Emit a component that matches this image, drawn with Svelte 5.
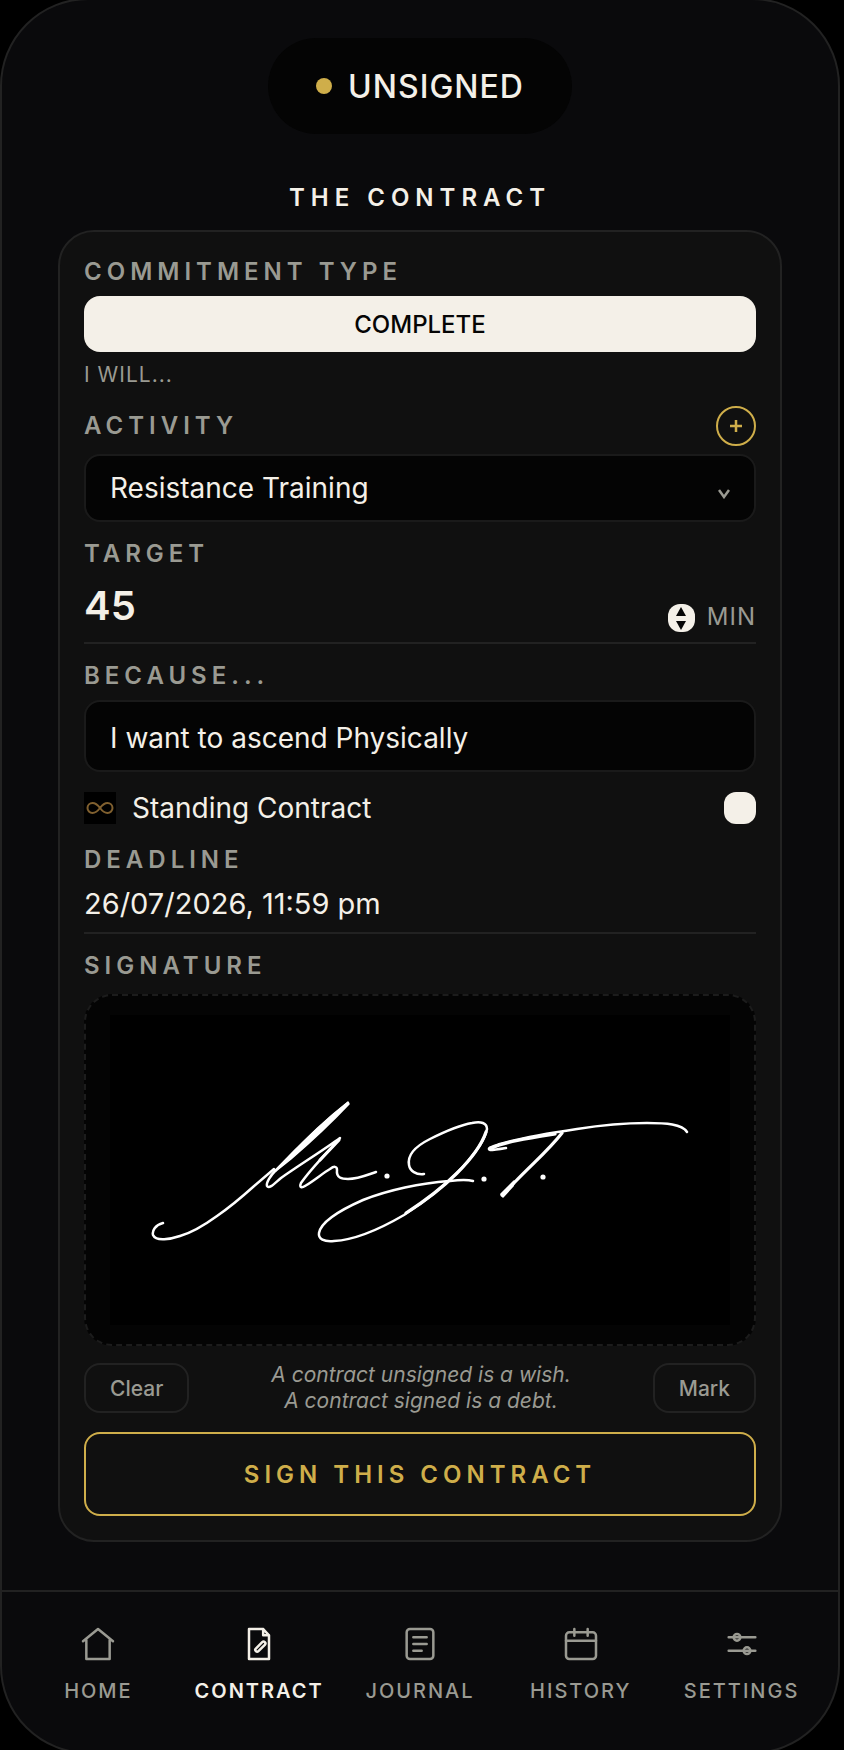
<script lang="ts">
  const commitmentTypes = ["COMPLETE"];
  const activities = ["Resistance Training"];

  const navItems = [
    { id: "home", label: "HOME" },
    { id: "contract", label: "CONTRACT" },
    { id: "journal", label: "JOURNAL" },
    { id: "history", label: "HISTORY" },
    { id: "settings", label: "SETTINGS" }
  ];

  let commitment = $state("COMPLETE");
  let activity = $state("Resistance Training");
  let target = $state(45);
  let because = $state("I want to ascend Physically");
  let standing = $state(false);
  let deadline = $state("26/07/2026, 11:59 pm");
  let marked = $state(true);
  let signed = $state(false);
  let currentPage = $state("contract");

  function step(amount: number) {
    target = Math.max(0, target + amount);
  }

  function clearSignature() {
    marked = false;
    signed = false;
  }
</script>

<div class="stage">
  <div class="phone">
    <main>
      <div class="status" role="status">
        <span class="status-dot" class:signed></span>
        {signed ? "SIGNED" : "UNSIGNED"}
      </div>

      <h1>THE CONTRACT</h1>

      <form class="card" onsubmit={(e) => e.preventDefault()}>
        <div class="field">
          <span class="label" id="commitment-label">COMMITMENT TYPE</span>
          <div class="segments" role="group" aria-labelledby="commitment-label">
            {#each commitmentTypes as type}
              <button type="button" class="segment" aria-pressed={commitment === type} onclick={() => (commitment = type)}>{type}</button>
            {/each}
          </div>
          <p class="hint">I WILL...</p>
        </div>

        <div class="field">
          <div class="label-row">
            <label class="label" for="activity">ACTIVITY</label>
            <button type="button" class="add" aria-label="Add activity">
              <svg viewBox="0 0 12 12" aria-hidden="true"><path d="M6 0v12M0 6h12" /></svg>
            </button>
          </div>
          <div class="select">
            <select id="activity" bind:value={activity}>
              {#each activities as name}
                <option>{name}</option>
              {/each}
            </select>
            <svg class="caret" viewBox="0 0 12 10" aria-hidden="true"><path d="M1 1l5 7 5-7" /></svg>
          </div>
        </div>

        <div class="field">
          <label class="label" for="target">TARGET</label>
          <div class="target">
            <input id="target" type="number" min="0" bind:value={target} />
            <div class="stepper">
              <button type="button" aria-label="Increase" onclick={() => step(1)}>
                <svg viewBox="0 0 10 9" aria-hidden="true"><path d="M5 0l5 9H0z" /></svg>
              </button>
              <button type="button" aria-label="Decrease" onclick={() => step(-1)}>
                <svg viewBox="0 0 10 9" aria-hidden="true"><path d="M5 9l5-9H0z" /></svg>
              </button>
            </div>
            <span class="unit">MIN</span>
          </div>
        </div>

        <div class="field">
          <label class="label" for="because">BECAUSE...</label>
          <input id="because" class="box" type="text" bind:value={because} />
        </div>

        <label class="standing">
          <svg class="infinity" viewBox="0 0 32 32" aria-hidden="true">
            <path d="M16 16c-3-4-5-5-7.500-5a5 5 0 0 0 0 10c2.500 0 4.500-1 7.500-5s5-5 7.500-5a5 5 0 0 1 0 10c-2.500 0-4.500-1-7.500-5z" />
          </svg>
          <span>Standing Contract</span>
          <input type="checkbox" bind:checked={standing} />
        </label>

        <div class="field">
          <label class="label" for="deadline">DEADLINE</label>
          <input id="deadline" class="deadline" type="text" bind:value={deadline} />
        </div>

        <div class="field signature">
          <span class="label">SIGNATURE</span>
          <div class="pad">
            <svg viewBox="0 0 620 310" role="img" aria-label="Signature">
              <rect width="620" height="310" fill="#000" />
              {#if marked}
                <g class="ink">
                  <path d="M53 208C45 210 42 216 43 220C46 227 61 224 70 221C84 217 96 209 107 201C120 192 133 181 143 172L164 154" />
                  <path d="M238 88C212 109 188 132 166 155C160 161 156 168 157 171C159 175 166 167 171 163C188 151 215 134 230 123C219 136 202 152 191 168C189 173 192 173 195 171C205 165 213 158 220 154C224 151 227 151 227 155C226 163 232 164 238 164C248 164 257 160 266 157" />
                  <path class="firm" d="M229 125L210 145" />
                  <path class="blot" d="M238 87C220 101 198 121 178 143L166 156L181 144C203 125 222 107 239 89z" />
                  <path d="M314 159C306 160 300 156 299 150C297 139 308 130 320 124C336 116 350 110 362 108C371 106 377 108 377 114C375 125 367 135 358 146C340 167 320 183 294 200C270 214 244 225 224 226C214 227 208 224 209 218C211 207 228 196 253 185C278 175 311 168 339 166C348 165 356 164 363 166" />
                  <path class="firm" d="M376 117C367 143 334 174 296 198" />
                  <path d="M396 133C390 134 384 135 380 135C376 133 384 131 390 129C414 122 440 118 467 114C492 110 516 108 537 108C556 108 572 109 577 117" />
                  <path class="firm" d="M382 133C394 127 420 123 445 119M452 118C438 136 422 149 404 168L392 180" />
                  <path class="blot" d="M404 166L391 179L393 182L403 171z" />
                </g>
                <circle cx="277" cy="161" r="2.600" />
                <circle cx="374" cy="164" r="2.600" />
                <circle cx="433" cy="162" r="2.600" />
              {/if}
            </svg>
          </div>
        </div>

        <div class="pad-actions">
          <button type="button" class="small" onclick={clearSignature}>Clear</button>
          <p>A contract unsigned is a wish.<br />A contract signed is a debt.</p>
          <button type="button" class="small" onclick={() => (marked = true)}>Mark</button>
        </div>

        <button type="submit" class="sign" onclick={() => (signed = marked)}>SIGN THIS CONTRACT</button>
      </form>
    </main>

    <nav aria-label="Main">
      {#each navItems as item}
        <a
          href="#{item.id}"
          class:active={currentPage === item.id}
          aria-current={currentPage === item.id ? "page" : undefined}
          onclick={() => (currentPage = item.id)}
        >
          <svg viewBox="0 0 24 24" aria-hidden="true">
            {#if item.id === "home"}
              <path d="M3 10.300L12 3l9 7.300M5 9.500V21h14V9.500" />
            {:else if item.id === "contract"}
              <path d="M6 3h8.500L18 6.800V21H6zM14.500 3v3.800H18" />
              <rect x="9" y="12.500" width="7.600" height="2.200" rx="1.100" transform="rotate(-45 12.800 13.600)" />
            {:else if item.id === "journal"}
              <rect x="4" y="3" width="16" height="18" rx="2" />
              <path d="M8 8h8M8 12h8M8 16h5" />
            {:else if item.id === "history"}
              <rect x="3" y="5" width="18" height="16" rx="2" />
              <path d="M3 10h18M8 3v4M16 3v4" />
            {:else}
              <path d="M4 8h16M4 16h16" />
              <circle cx="9" cy="8" r="2" />
              <circle cx="15" cy="16" r="2" />
            {/if}
          </svg>
          <span>{item.label}</span>
        </a>
      {/each}
    </nav>
  </div>
</div>

<style>
  :global(body) {
    background: #000;
  }

  .stage {
    --cream: #f4f0e8;
    --grey: #9a9a92;
    --gold: #cfae4a;
    --line: #222;

    display: flex;
    flex-direction: column;
    box-sizing: border-box;
    min-height: 100vh;
    padding-right: 4px;
    overflow: hidden;
    background: #000;
    color: var(--cream);
    font-family: Inter, "Liberation Sans", sans-serif;
  }

  .stage :global(*) {
    box-sizing: border-box;
  }

  .phone {
    display: flex;
    flex: 1;
    flex-direction: column;
    margin: -2px 0 -4px;
    border: 2px solid var(--line);
    border-radius: 88px;
    background: #0a0a0c;
    overflow: hidden;
  }

  main {
    display: flex;
    flex: 1;
    flex-direction: column;
    align-items: center;
    padding: 38px 56px 48px;
  }

  button,
  input,
  select {
    margin: 0;
    padding: 0;
    border: 0;
    background: none;
    color: inherit;
    font: inherit;
  }

  input,
  select {
    min-width: 0;
    outline: none;
  }

  button {
    cursor: pointer;
  }

  p {
    margin: 0;
  }

  svg {
    display: block;
  }

  .status {
    display: flex;
    align-items: center;
    gap: 16px;
    height: 96px;
    padding: 0 48px;
    border-radius: 48px;
    background: #040404;
    font-size: 32px;
    font-weight: 500;
    letter-spacing: 1px;
  }

  .status-dot {
    width: 16px;
    height: 16px;
    border-radius: 50%;
    background: var(--gold);
  }

  .status-dot.signed {
    background: var(--cream);
  }

  h1 {
    margin: 48px 0 16px;
    font-size: 24px;
    font-weight: 600;
    line-height: 32px;
    letter-spacing: 6px;
  }

  .card {
    display: flex;
    flex-direction: column;
    gap: 16px;
    width: 100%;
    padding: 24px;
    border: 2px solid var(--line);
    border-radius: 36px;
    background: #101010;
  }

  .field {
    display: flex;
    flex-direction: column;
    gap: 8px;
  }

  .label {
    color: var(--grey);
    font-size: 24px;
    font-weight: 600;
    line-height: 32px;
    letter-spacing: 5px;
  }

  .label-row {
    display: flex;
    align-items: center;
    justify-content: space-between;
  }

  .segments {
    display: flex;
    border-radius: 16px;
    overflow: hidden;
  }

  .segment {
    flex: 1;
    height: 56px;
    font-size: 24px;
    font-weight: 500;
  }

  .segment[aria-pressed="true"] {
    background: var(--cream);
    color: #050505;
  }

  .hint {
    color: var(--grey);
    font-size: 21px;
    line-height: 30px;
    letter-spacing: 1px;
  }

  .add {
    display: grid;
    place-items: center;
    width: 40px;
    height: 40px;
    border: 2px solid var(--gold);
    border-radius: 50%;
  }

  .add svg {
    width: 12px;
    stroke: var(--gold);
    stroke-width: 2.5;
  }

  .select {
    display: grid;
    align-items: center;
  }

  .select > * {
    grid-area: 1 / 1;
  }

  .select select,
  .box {
    width: 100%;
    height: 68px;
    padding: 0 24px;
    border: 2px solid #1a1a1a;
    border-radius: 16px;
    background: #040404;
    font-size: 28px;
    appearance: none;
  }

  .box {
    height: 72px;
    padding-top: 4px;
  }

  .caret {
    width: 12px;
    margin: 12px 26px 0 0;
    justify-self: end;
    fill: none;
    stroke: var(--grey);
    stroke-width: 2.5;
    pointer-events: none;
  }

  .target {
    display: flex;
    align-items: flex-end;
    gap: 12px;
    padding-bottom: 10px;
    border-bottom: 2px solid var(--line);
  }

  .target input {
    flex: 1;
    height: 54px;
    font-size: 40px;
    font-weight: 600;
    appearance: textfield;
  }

  .target input::-webkit-inner-spin-button {
    display: none;
  }

  .stepper {
    display: flex;
    flex-direction: column;
    width: 27px;
    height: 28px;
    border-radius: 12px;
    background: var(--cream);
    overflow: hidden;
  }

  .stepper button {
    display: grid;
    flex: 1;
    place-items: center;
  }

  .stepper svg {
    width: 10px;
    fill: #050505;
  }

  .unit {
    color: var(--grey);
    font-size: 24px;
    line-height: 30px;
    letter-spacing: 1px;
  }

  .standing {
    display: flex;
    align-items: center;
    gap: 16px;
    height: 40px;
    font-size: 28px;
  }

  .standing span {
    flex: 1;
  }

  .infinity {
    width: 32px;
    background: #000;
    fill: none;
    stroke: #80602f;
    stroke-width: 2;
  }

  .standing input {
    width: 32px;
    height: 32px;
    border-radius: 12px;
    background: var(--cream);
    appearance: none;
  }

  .standing input:checked {
    background: var(--gold);
  }

  .deadline {
    height: 50px;
    padding-bottom: 10px;
    border-bottom: 2px solid var(--line);
    font-size: 29px;
  }

  .signature {
    gap: 12px;
  }

  .pad {
    padding: 19px 24px;
    border: 2px dashed #1c1c1c;
    border-radius: 28px;
    background: #040404;
  }

  .pad svg {
    width: 100%;
    fill: #fff;
  }

  .ink {
    fill: none;
    stroke: #fff;
    stroke-width: 2.5;
    stroke-linecap: round;
    stroke-linejoin: round;
  }

  .ink .firm {
    stroke-width: 3.2;
  }

  .ink .blot {
    fill: #fff;
    stroke-width: 1.5;
  }

  .pad-actions {
    display: flex;
    align-items: center;
    justify-content: space-between;
    min-height: 54px;
    padding-bottom: 2px;
    color: var(--grey);
    font-size: 21px;
  }

  .pad-actions p {
    font-style: italic;
    line-height: 26px;
    text-align: center;
  }

  .small {
    height: 50px;
    padding: 0 24px;
    border: 2px solid var(--line);
    border-radius: 16px;
    font-weight: 500;
  }

  .sign {
    height: 84px;
    border: 2px solid var(--gold);
    border-radius: 16px;
    color: var(--gold);
    font-size: 24px;
    font-weight: 600;
    letter-spacing: 5px;
  }

  nav {
    display: grid;
    grid-template-columns: repeat(5, 1fr);
    padding: 32px 16px 46px;
    border-top: 2px solid var(--line);
  }

  nav a {
    display: flex;
    flex-direction: column;
    align-items: center;
    gap: 12px;
    color: var(--grey);
    font-size: 20px;
    font-weight: 500;
    line-height: 30px;
    letter-spacing: 2px;
    text-decoration: none;
  }

  nav a.active {
    color: var(--cream);
    font-weight: 600;
  }

  nav svg {
    width: 40px;
    fill: none;
    stroke: currentColor;
    stroke-width: 1.5;
    stroke-linecap: round;
    stroke-linejoin: round;
  }
</style>
